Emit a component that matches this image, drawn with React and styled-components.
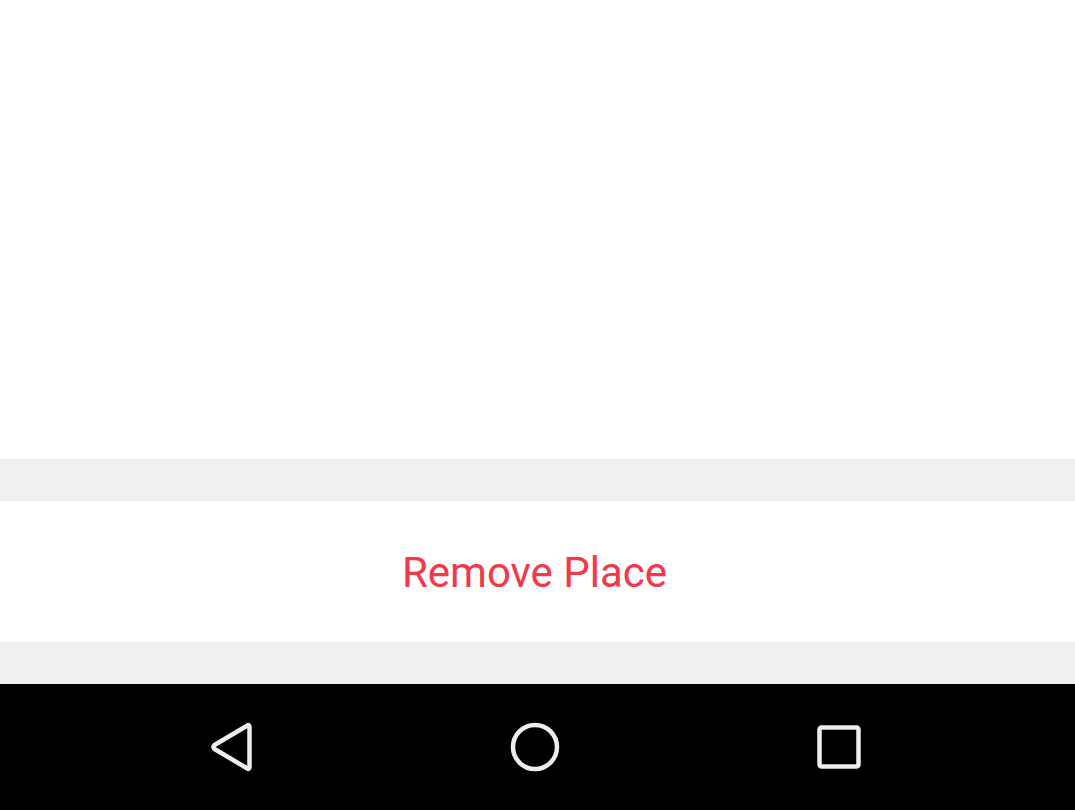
import React from "react";
import styled, { createGlobalStyle } from "styled-components";

const GlobalStyle = createGlobalStyle`
  html, body {
    margin: 0;
    padding: 0;
    background: #ffffff;
    font-family: Roboto, "Noto Sans", sans-serif;
  }
`;

const Screen = styled.div`
  display: flex;
  flex-direction: column;
  width: 1075px;
  height: 810px;
  overflow: hidden;
`;

const Content = styled.div`
  height: 459px;
  background: #ffffff;
`;

const Spacer = styled.div`
  height: 42px;
  background: #eff0f2;
`;

const ActionRow = styled.button`
  height: 141px;
  display: flex;
  align-items: center;
  justify-content: center;
  border: none;
  padding: 2px 6px 0 0;
  background: #ffffff;
  color: #f5374a;
  font-family: Roboto, "Noto Sans", sans-serif;
  font-size: 42px;
  font-weight: 400;
  cursor: pointer;
`;

const NavBar = styled.nav`
  flex: 1;
  background: #000000;
  display: flex;
  align-items: center;
  justify-content: center;
  gap: 244px;
  padding-right: 6px;
`;

const NavButton = styled.div`
  width: 60px;
  height: 60px;
  display: flex;
  align-items: center;
  justify-content: center;
`;

const stroke = "#ededed";

export default function App() {
  return (
    <>
      <GlobalStyle />
      <Screen>
        <Content />
        <Spacer />
        <ActionRow>Remove Place</ActionRow>
        <Spacer />
        <NavBar>
          <NavButton>
            <svg width="60" height="60" viewBox="0 0 60 60">
              <path
                d="M48.5 10 L48.5 50 Q48.5 53 46 51.3 L13.5 32 Q11.5 30 13.5 28 L46 8.7 Q48.5 7 48.5 10 Z"
                fill="none"
                stroke={stroke}
                strokeWidth="4.5"
                strokeLinejoin="round"
              />
            </svg>
          </NavButton>
          <NavButton>
            <svg width="60" height="60" viewBox="0 0 60 60">
              <circle cx="30" cy="30" r="22" fill="none" stroke={stroke} strokeWidth="4.5" />
            </svg>
          </NavButton>
          <NavButton>
            <svg width="60" height="60" viewBox="0 0 60 60">
              <rect
                x="10.5"
                y="10.5"
                width="39"
                height="39"
                rx="2"
                fill="none"
                stroke={stroke}
                strokeWidth="4.5"
              />
            </svg>
          </NavButton>
        </NavBar>
      </Screen>
    </>
  );
}
